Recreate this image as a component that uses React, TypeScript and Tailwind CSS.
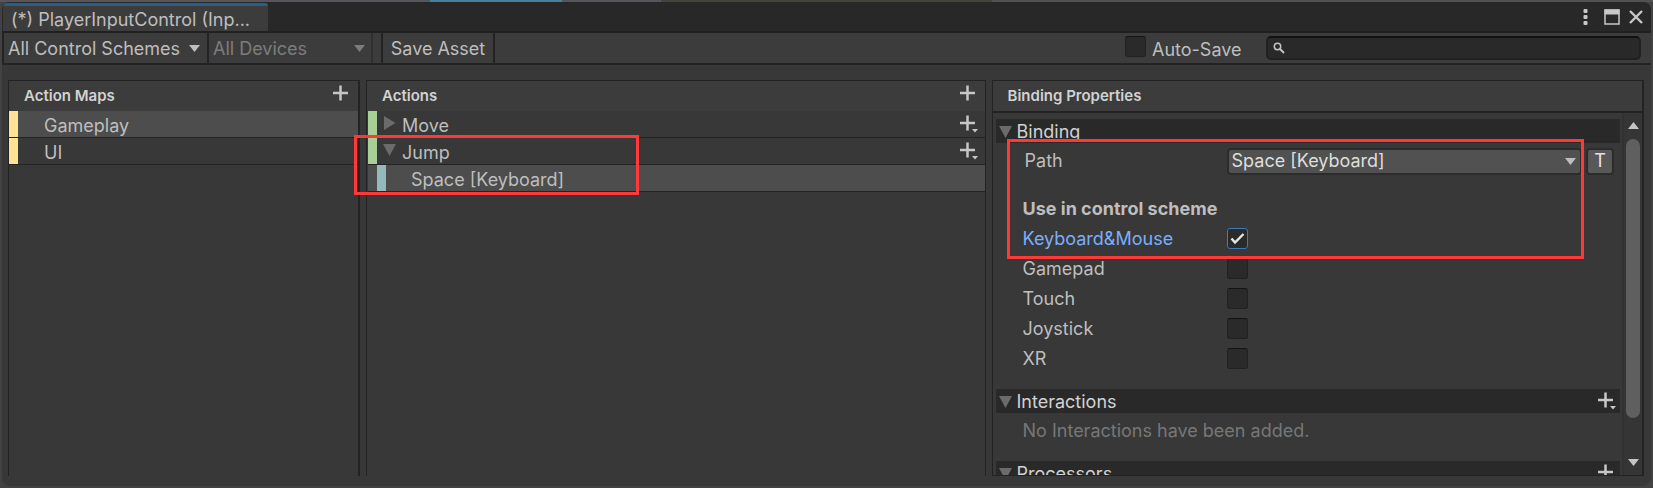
import React, { useId, useState } from "react";

function Plus({ menu = false }: { menu?: boolean }) {
  return (
    <svg width="20" height="20" viewBox="0 0 20 20" className="block shrink-0" aria-hidden="true">
      <path d="M2 9h15M9.500 1.500v15" stroke="#c6c6c6" strokeWidth="2.500" />
      {menu && <path d="M14 15h6l-3 3.400z" fill="#c6c6c6" />}
    </svg>
  );
}

function Caret({ open = true }: { open?: boolean }) {
  return (
    <svg width="13" height="14" viewBox="0 0 13 14" className="block shrink-0" aria-hidden="true">
      <path d={open ? "M0 1h13L6.5 13z" : "M1 0v14L12.5 7z"} fill="#6b6b6b" />
    </svg>
  );
}

function Arrow({ up = false }: { up?: boolean }) {
  return (
    <svg width="11" height="7" viewBox="0 0 11 7" className="block shrink-0" aria-hidden="true">
      <path d={up ? "M0 7h11L5.5 0z" : "M0 0h11L5.5 7z"} fill="currentColor" />
    </svg>
  );
}

function Tick({ id, checked, onChange }: { id: string; checked: boolean; onChange: () => void }) {
  return (
    <span className="relative block size-[21px] shrink-0">
      <input
        id={id}
        type="checkbox"
        checked={checked}
        onChange={onChange}
        className="block size-[21px] appearance-none rounded-[3px] border border-[#212121] border-t-[#131313] bg-[#2a2a2a] checked:border-[#3a79bb]"
      />
      {checked && (
        <svg width="21" height="21" viewBox="0 0 21 21" className="pointer-events-none absolute inset-0" aria-hidden="true">
          <path d="M4.5 10.500l3.500 4L16.500 6" fill="none" stroke="#e6e6e6" strokeWidth="2.4" />
        </svg>
      )}
    </span>
  );
}

function PanelHeader({ title, add }: { title: string; add?: string }) {
  return (
    <div className="flex h-[30px] shrink-0 items-center justify-between bg-[#3c3c3c] pl-[15px] pr-[7px]">
      <h2 className="text-[15px] font-semibold text-[#d2d2d2]">{title}</h2>
      {add && (
        <button type="button" aria-label={add} className="-mt-1">
          <Plus />
        </button>
      )}
    </div>
  );
}

function SectionBar({ title, add }: { title: string; add?: string }) {
  return (
    <div className="flex h-6 shrink-0 items-center bg-[#292929] pl-[3px] pr-[4px]">
      <button type="button" className="flex items-center gap-[5px] pt-[2px] text-[#d2d2d2]">
        <Caret />
        {title}
      </button>
      {add && (
        <button type="button" aria-label={add} className="ml-auto">
          <Plus menu />
        </button>
      )}
    </div>
  );
}

function SchemeRow({ name, initial = false }: { name: string; initial?: boolean }) {
  const id = useId();
  const [on, setOn] = useState(initial);
  return (
    <div className="flex h-[30px] items-center">
      <label htmlFor={id} className={on ? "w-[204px] text-[#7baefa]" : "w-[204px]"}>
        {name}
      </label>
      <span className="pb-px">
        <Tick id={id} checked={on} onChange={() => setOn(!on)} />
      </span>
    </div>
  );
}

export default function App() {
  const [autoSave, setAutoSave] = useState(false);
  return (
    <div className="flex h-screen flex-col bg-[#424242] px-[2px] pb-[2px] font-['Inter',sans-serif] text-[18px] leading-[24px] text-[#bebebe]">
      <div className="-mx-[2px] flex h-[2px] shrink-0 bg-[#505050]">
        <div className="w-[26%] bg-[#55555c]" />
        <div className="w-[8%] bg-[#46809b]" />
        <div className="w-[6%] bg-[#55555c]" />
        <div className="w-[20%] bg-[#47443c]" />
      </div>
      <div className="flex min-h-0 flex-1 flex-col overflow-hidden rounded-[8px] bg-[#383838]">
        <header className="flex h-[31px] shrink-0 items-end justify-between border-b-2 border-[#212121] bg-[#282828]">
          <div className="ml-px flex h-[28px] w-[265px] items-center rounded-t-[3px] border-t-[3px] border-[#2c5d87] bg-[#3c3c3c] pl-[8px] pt-[2px]">
            <h1 className="truncate">(*) PlayerInputControl (Inp...</h1>
          </div>
          <div className="flex h-full items-center gap-4 pr-2">
            <button type="button" aria-label="Menu">
              <svg width="5" height="17" viewBox="0 0 5 17" fill="#c8c8c8" className="block">
                <rect x="0.500" y="1" width="4" height="4" rx="1" />
                <rect x="0.500" y="7" width="4" height="4" rx="1" />
                <rect x="0.500" y="13" width="4" height="4" rx="1" />
              </svg>
            </button>
            <button type="button" aria-label="Maximize">
              <svg width="16" height="16" viewBox="0 0 16 16" className="block">
                <path d="M1 1h14v14H1z" fill="none" stroke="#c8c8c8" strokeWidth="1.500" />
                <path d="M0.500 0.500h15v5h-15z" fill="#c8c8c8" />
              </svg>
            </button>
            <button type="button" aria-label="Close" className="-ml-[7px]">
              <svg width="14" height="14" viewBox="0 0 14 14" className="block">
                <path d="M1 1l12 12M13 1L1 13" stroke="#c8c8c8" strokeWidth="2.400" />
              </svg>
            </button>
          </div>
        </header>

        <div className="flex h-8 shrink-0 items-stretch border-b-2 border-[#232323] bg-[#3c3c3c]">
          <div className="relative flex w-[207px] items-center border-x-2 border-[#232323]">
            <select aria-label="Control scheme" className="h-full w-full appearance-none pl-1 pt-px">
              <option>All Control Schemes</option>
            </select>
            <span className="pointer-events-none absolute right-[7px]"><Arrow /></span>
          </div>
          <div className="relative flex w-[164px] items-center border-r-2 border-[#303030] text-[#7c7c7c]">
            <select aria-label="Device" disabled className="h-full w-full appearance-none pl-1 pt-px">
              <option>All Devices</option>
            </select>
            <span className="pointer-events-none absolute right-[6px]"><Arrow /></span>
          </div>
          <button type="button" className="ml-2 w-[114px] border-x-2 border-[#232323] pt-px">
            Save Asset
          </button>
          <div className="ml-auto flex items-center gap-[6px]">
            <span className="-mt-1">
              <Tick id="autosave" checked={autoSave} onChange={() => setAutoSave(!autoSave)} />
            </span>
            <label htmlFor="autosave" className="w-[94px] pt-[3px]">Auto-Save</label>
          </div>
          <div className="relative ml-5 mr-[10px] flex w-[375px] items-center">
            <input
              type="text"
              aria-label="Search"
              className="h-6 w-full rounded-[5px] border-2 border-[#212121] border-t-[#121212] bg-[#292929] pl-6 outline-none"
            />
            <svg width="12" height="12" viewBox="0 0 12 12" className="pointer-events-none absolute left-[7px]" aria-hidden="true">
              <circle cx="4.500" cy="4.500" r="3.200" fill="none" stroke="#c4c4c4" strokeWidth="1.500" />
              <path d="M7 7l4 4" stroke="#c4c4c4" strokeWidth="1.900" />
            </svg>
          </div>
        </div>

        <main className="flex min-h-0 flex-1 gap-[6px] pb-[10px] pl-[6px] pr-[7px] pt-[15px]">
          <section className="flex w-[352px] shrink-0 flex-col border-l border-r-2 border-t border-[#232323]">
            <PanelHeader title="Action Maps" add="Add action map" />
            <ul>
              <li className="flex h-[27px] border-b border-[#232323] bg-[#4d4d4d]">
                <span className="w-[9px] bg-[#ffe394]" />
                <span className="pl-[26px] pt-[3px]">Gameplay</span>
              </li>
              <li className="flex h-[27px] border-b border-[#232323]">
                <span className="w-[9px] bg-[#ffe394]" />
                <span className="pl-[26px] pt-[3px]">UI</span>
              </li>
            </ul>
          </section>

          <section className="relative flex min-w-0 flex-[619_1_0] flex-col border border-b-0 border-[#232323]">
            <PanelHeader title="Actions" add="Add action" />
            <ul className="pl-px">
              <li className="flex h-[27px] items-start border-b border-[#232323]">
                <span className="h-full w-[9px] bg-[#a8d096]" />
                <span className="ml-[6px] mt-[5px]"><Caret open={false} /></span>
                <span className="pl-[6px] pt-[3px]">Move</span>
                <button type="button" aria-label="Add binding to Move" className="ml-auto mr-[7px] mt-[3px]"><Plus menu /></button>
              </li>
              <li className="flex h-[27px] items-start border-b border-[#232323]">
                <span className="h-full w-[9px] bg-[#a8d096]" />
                <span className="ml-[6px] mt-[5px]"><Caret /></span>
                <span className="pl-[6px] pt-[3px]">Jump</span>
                <button type="button" aria-label="Add binding to Jump" className="ml-auto mr-[7px] mt-[3px]"><Plus menu /></button>
              </li>
              <li className="flex h-[27px] border-b border-[#232323] bg-[#4d4d4d] pl-[9px]">
                <span className="w-[9px] bg-[#94b9bc]" />
                <span className="pl-[25px] pt-[3px]">Space [Keyboard]</span>
              </li>
            </ul>
            <div className="pointer-events-none absolute -left-[13px] top-[54px] h-[60px] w-[285px] border-[3px] border-[#ff3838]" />
          </section>

          <section className="relative flex min-w-0 flex-[651_1_0] flex-col border border-r-2 border-[#232323]">
            <PanelHeader title="Binding Properties" />
            <div className="flex min-h-0 flex-1 border-t-2 border-[#232323]">
              <div className="flex min-w-0 flex-1 flex-col overflow-hidden pl-[3px] pr-[2px] pt-[6px]">
                <SectionBar title="Binding" />
                <div className="flex h-9 shrink-0 items-center pl-[27px] pr-[6px]">
                  <label htmlFor="path" className="w-[204px] shrink-0 pl-[2px]">Path</label>
                  <div className="relative flex min-w-0 flex-1 items-center">
                    <select id="path" className="h-[27px] w-full appearance-none rounded-[4px] border-2 border-[#2c2c2c] bg-[#515151] pl-[3px] leading-[22px] text-[#dedede]">
                      <option>Space [Keyboard]</option>
                    </select>
                    <span className="pointer-events-none absolute right-[6px]"><Arrow /></span>
                  </div>
                  <button type="button" className="ml-1 h-[27px] w-[28px] shrink-0 rounded-[4px] border-2 border-[#2c2c2c] bg-[#585858] leading-[22px] text-[#e4e4e4]">T</button>
                </div>
                <div className="flex flex-col pb-[15px] pl-[27px] pt-[15px]">
                  <h3 className="h-[30px] leading-[30px] font-bold">Use in control scheme</h3>
                  <SchemeRow name="Keyboard&amp;Mouse" initial />
                  <SchemeRow name="Gamepad" />
                  <SchemeRow name="Touch" />
                  <SchemeRow name="Joystick" />
                  <SchemeRow name="XR" />
                </div>
                <SectionBar title="Interactions" add="Add interaction" />
                <p className="h-12 shrink-0 pl-[27px] pt-[6px] text-[#777777]">No Interactions have been added.</p>
                <SectionBar title="Processors" add="Add processor" />
              </div>
              <div className="flex w-5 shrink-0 flex-col items-center border-l-2 border-[#313131] bg-[#353535] pb-[9px] pt-[9px] text-[#c4c4c4]">
                <Arrow up />
                <div className="my-[10px] flex min-h-0 w-[14px] flex-1 flex-col">
                  <div className="h-[90%] rounded-full bg-[#5f5f5f]" />
                </div>
                <Arrow />
              </div>
            </div>
            <div className="pointer-events-none absolute left-[14px] right-[58px] top-[58px] h-[120px] border-[3px] border-[#ff3838]" />
          </section>
        </main>
      </div>
    </div>
  );
}
